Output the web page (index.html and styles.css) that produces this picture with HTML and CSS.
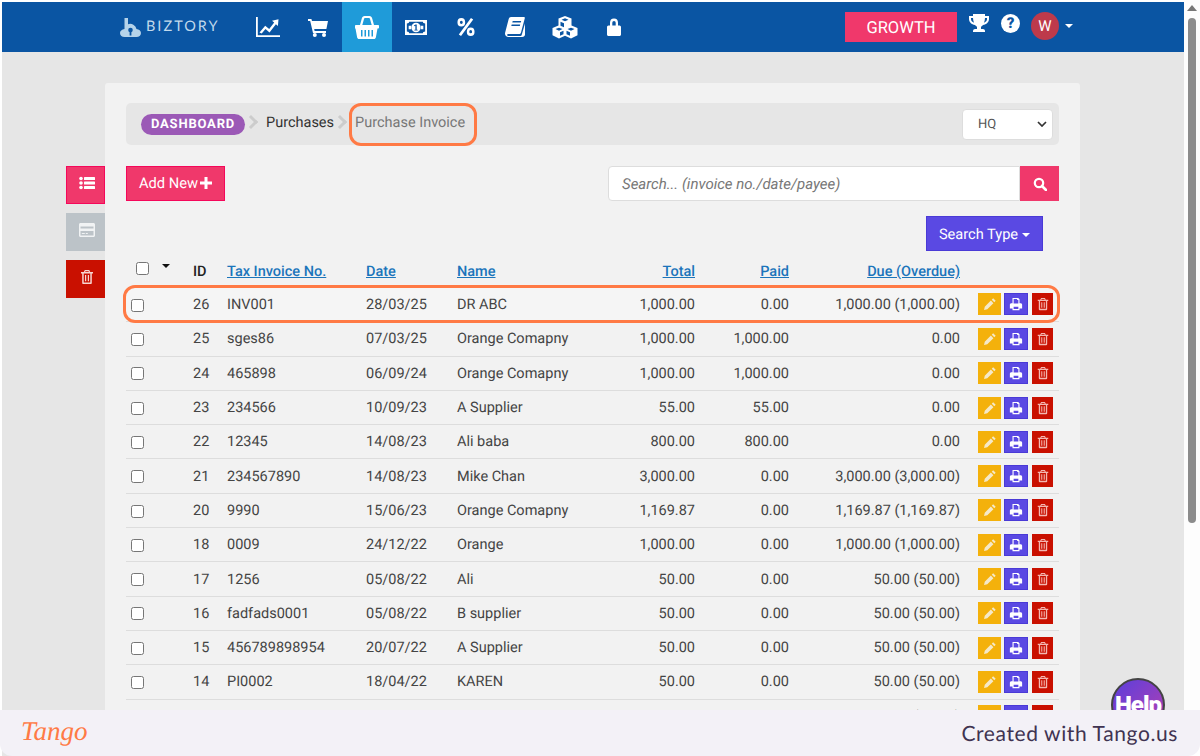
FILE: index.html
```html
<!DOCTYPE html>
<html lang="en">
<head>
<meta charset="utf-8">
<title>Purchase Invoice</title>
<link rel="stylesheet" href="styles.css">
</head>
<body>
<svg class="defs" width="0" height="0" aria-hidden="true">
  <symbol id="i-pencil" viewBox="0 0 16 16"><path d="M11.6 1.5l2.9 2.9-1.6 1.6L10 3.1zM9 4.1L11.9 7l-7 7-3.7.8.8-3.7z" fill="currentColor"/></symbol>
  <symbol id="i-print" viewBox="0 0 16 16"><path fill-rule="evenodd" d="M4 1h6.500L12 2.500V7h1.300c.9 0 1.700.8 1.700 1.700V13h-3v2H4v-2H1V8.700C1 7.800 1.800 7 2.700 7H4zM5.300 2.300V7.300h5.400V3.500H9.300V2.300zM5.300 11v2.800h5.400V11z" fill="currentColor"/></symbol>
  <symbol id="i-trash" viewBox="0 0 16 16"><path fill-rule="evenodd" d="M5.800 1h4.400l1 2H14v1.500h-1.200V14c0 .6-.5 1-1 1H4.200c-.5 0-1-.4-1-1V4.500H2V3h2.800zM6.500 2.200L6.100 3h3.800l-.4-.8zM4.700 4.500v9h6.600v-9zM6 6h1.200v6.200H6zM8.800 6H10v6.200H8.800z" fill="currentColor"/></symbol>
</svg>

<div class="frame">
  <header class="topbar">
    <div class="brand">
      <svg class="brand-mark" viewBox="0 0 21 19"><path d="M4.500 0H8v6.200A6.500 6.500 0 0 1 16.500 11c2.500.4 4.500 1.900 4.500 4 0 2.400-2 4-4.500 4h-12C2 19 0 17.400 0 15c0-2 1.800-3.500 4.500-4z" fill="#b5d3ea"/><circle cx="10.500" cy="12" r="2.300" fill="#0a55a3"/><rect x="9.600" y="13" width="1.800" height="4.500" fill="#0a55a3"/></svg>
      <span class="brand-name">BIZTORY</span>
    </div>
    <nav class="nav">
      <a class="nav-item"><svg class="ni ni-chart" viewBox="0 0 24 20" preserveAspectRatio="none"><path d="M0 0h1.800v18.200H24V20H0z" fill="#fff"/><path d="M3.500 15.500l5.700-6.800 4 3.400 5-6.500-2.200-1.800 6.500-1.600-.6 6.700-2-1.700-6.400 8.200-4-3.400-3.800 4.400z" fill="#fff"/></svg></a>
      <a class="nav-item"><svg class="ni ni-cart" viewBox="0 0 20 18" preserveAspectRatio="none"><path d="M0 0h3.400l.6 2H20l-1.600 8H6.200l.4 2H18v2H5L2.200 2H0z" fill="#fff"/><circle cx="6.800" cy="16" r="2" fill="#fff"/><circle cx="16" cy="16" r="2" fill="#fff"/></svg></a>
      <a class="nav-item active"><svg class="ni ni-basket" viewBox="0 0 24 23" preserveAspectRatio="none"><path fill-rule="evenodd" d="M5 9l1.800-6.500C7.100 1 8.200 0 9.500 0h5c1.300 0 2.400 1 2.700 2.500L19 9h4c.6 0 1 .4 1 1v1.500c0 .6-.4 1-1 1h-.5l-1.600 8.700c-.2 1-1 1.800-2 1.800H4.100c-1 0-1.800-.8-2-1.800L.5 12.500H0v-3C0 9.400.4 9 1 9zM7.300 9h9.400L15 3c-.1-.6-.5-.9-1-.9H10c-.5 0-.9.3-1 .9zM6 14v6.500h1.500V14zM9.500 14v6.500H11V14zM13 14v6.500h1.500V14zM16.500 14v6.500H18V14z" fill="#fff"/></svg></a>
      <a class="nav-item"><svg class="ni ni-money" viewBox="0 0 24 17" preserveAspectRatio="none"><path fill-rule="evenodd" d="M0 0h24v17H0zM2 4v9c1.500 0 2.500 1 2.500 2H19.500c0-1 1-2 2.500-2V4c-1.500 0-2.500-1-2.500-2H4.500c0 1-1 2-2.500 2z" fill="#fff"/><ellipse cx="12" cy="8.500" rx="5" ry="5.500" fill="#fff"/><path d="M11.500 5h1.300v6h1v1h-3.600v-1h1.100V6.500l-1 .7-.6-.9z" fill="#0a55a3"/><path d="M4 6.500h3c-.5 1.300-.5 2.700 0 4H4zM17 6.500h3v4h-3c.5-1.300.5-2.700 0-4z" fill="#fff"/></svg></a>
      <a class="nav-item"><svg class="ni ni-percent" viewBox="0 0 20 20" preserveAspectRatio="none"><path fill-rule="evenodd" d="M4.800 1a4.300 4.300 0 1 1 0 8.600 4.300 4.300 0 0 1 0-8.600zm0 2.700a1.600 1.600 0 1 0 0 3.200 1.600 1.600 0 0 0 0-3.200zM15.200 10.400a4.300 4.300 0 1 1 0 8.600 4.300 4.300 0 0 1 0-8.600zm0 2.700a1.600 1.600 0 1 0 0 3.200 1.600 1.600 0 0 0 0-3.200zM15.500 1L18 2.500 4.500 19 2 17.500z" fill="#fff"/></svg></a>
      <a class="nav-item"><svg class="ni ni-book" viewBox="0 0 20 20" preserveAspectRatio="none"><path fill-rule="evenodd" d="M6 0h13c.7 0 1 .6.800 1.200L16 15.500c-.3 1-1 1.500-2 1.500H3.500c-1 0-1.500.6-1.300 1.200.1.400.5.800 1.300.800h12c.6 0 1-.3 1.200-.9L20 6.500V18c-.4 1.200-1.500 2-2.800 2H3.500C1.500 20 0 18.500 0 16.800c0-.4 0-.7.100-1L3.700 2C4 .8 4.900 0 6 0zm1.700 4l-.4 1.500h8.500l.4-1.500zm-1 3.500l-.4 1.500h8.500l.4-1.500z" fill="#fff"/></svg></a>
      <a class="nav-item"><svg class="ni ni-cubes" viewBox="0 0 26 22" preserveAspectRatio="none"><path fill-rule="evenodd" d="M13 0l6.500 2.500v6.700l6 2.300v7L19 21.500l-6-2.500-6 2.500L.5 18.500v-7l6-2.300V2.500zM13 2.200L9.500 3.500 13 5l3.500-1.500zM7 11.200l-3.500 1.300L7 14l3.500-1.500zM19 11.200l-3.500 1.300L19 14l3.500-1.500zM8.500 5.500v3.800l3.500 1.500V7zM8 15.500v3.500l3.500-1.500V14zM18 15.500V19l-3.500-1.500V14z" fill="#fff"/></svg></a>
      <a class="nav-item"><svg class="ni ni-lock" viewBox="0 0 14 17" preserveAspectRatio="none"><path fill-rule="evenodd" d="M3 7V4.500a4 4 0 0 1 8 0V7h1.500c.8 0 1.500.7 1.500 1.500v7c0 .8-.7 1.500-1.500 1.500h-11C.7 17 0 16.300 0 15.500v-7C0 7.700.7 7 1.500 7zm2.300 0h3.400V4.500a1.700 1.700 0 0 0-3.400 0z" fill="#fff"/></svg></a>
    </nav>
    <div class="top-right">
      <a class="growth">GROWTH</a>
      <svg class="trophy" viewBox="0 0 20 20"><path fill-rule="evenodd" d="M4 0h12v2h4v3c0 3-2.500 5.500-6 6-.6.800-1.300 1.400-2 1.700V15h2c1 0 2 .9 2 2v1H4v-1c0-1.100 1-2 2-2h2v-2.300c-.7-.3-1.400-.9-2-1.700-3.500-.5-6-3-6-6V2h4zM2 4v1c0 1.600 1.200 3 3 3.700C4.400 7.300 4.100 5.700 4 4zm14 0c-.1 1.700-.4 3.300-1 4.700 1.800-.7 3-2.100 3-3.700V4z" fill="#fff"/></svg>
      <span class="help">?</span>
      <span class="avatar">W</span>
      <span class="caret caret-white"></span>
    </div>
  </header>

  <div class="page">
    <aside class="side">
      <a class="side-btn pink"><svg class="sb" viewBox="0 0 16 14"><circle cx="2" cy="2.500" r="1.800" fill="currentColor"/><circle cx="2" cy="7" r="1.800" fill="currentColor"/><circle cx="2" cy="11.500" r="1.800" fill="currentColor"/><rect x="5" y="1" width="11" height="3" rx=".6" fill="currentColor"/><rect x="5" y="5.500" width="11" height="3" rx=".6" fill="currentColor"/><rect x="5" y="10" width="11" height="3" rx=".6" fill="currentColor"/></svg></a>
      <a class="side-btn grey"><svg class="sb" viewBox="0 0 16 14"><path fill-rule="evenodd" d="M1.500 0h13c.8 0 1.500.7 1.500 1.500v11c0 .8-.7 1.500-1.500 1.500h-13C.7 14 0 13.300 0 12.500v-11C0 .7.700 0 1.500 0zM1.500 3.500v2h13v-2zM1.500 8v4.500h13V8zM2.800 10h3v1h-3zM6.800 10h2v1h-2z" fill="currentColor"/></svg></a>
      <a class="side-btn red"><svg class="sb"><use href="#i-trash"/></svg></a>
    </aside>

    <main class="card">
      <div class="crumbs">
        <span class="pill">DASHBOARD</span>
        <span class="sep"></span>
        <span class="crumb">Purchases</span>
        <span class="sep"></span>
        <span class="crumb current">Purchase Invoice</span>
        <span class="branch">HQ<svg class="chev" viewBox="0 0 10 6"><path d="M1 1l4 4 4-4" fill="none" stroke="#333" stroke-width="1.700"/></svg></span>
      </div>

      <div class="tools">
        <a class="add">Add New<svg class="plus" viewBox="0 0 12 12"><path d="M4.500 0h3v4.500H12v3H7.500V12h-3V7.500H0v-3h4.500z" fill="#fff"/></svg></a>
        <div class="search">
          <span class="search-input">Search... (invoice no./date/payee)</span>
          <a class="search-btn"><svg class="mag" viewBox="0 0 14 14"><circle cx="6" cy="6" r="4.200" fill="none" stroke="#fff" stroke-width="2.200"/><path d="M9 9l4 4" stroke="#fff" stroke-width="2.600" stroke-linecap="round"/></svg></a>
        </div>
      </div>

      <div class="type-row"><a class="search-type">Search Type<span class="caret caret-small"></span></a></div>

      <table class="grid">
        <colgroup><col class="c1"><col class="c2"><col class="c3"><col class="c4"><col class="c5"><col class="c6"><col class="c7"><col class="c8"><col class="c9"></colgroup>
        <thead>
          <tr>
            <th class="selall"><span class="box"></span><span class="caret caret-dark"></span></th>
            <th>ID</th>
            <th><a>Tax Invoice No.</a></th>
            <th><a>Date</a></th>
            <th><a>Name</a></th>
            <th class="r"><a>Total</a></th>
            <th class="r"><a>Paid</a></th>
            <th class="r"><a>Due (Overdue)</a></th>
            <th></th>
          </tr>
        </thead>
        <tbody id="rows"></tbody>
      </table>
    </main>
  </div>

  <div class="mark mark-crumb"></div>
  <div class="mark mark-row"></div>
  <div class="help-bubble">Help</div>
  <div class="scrollbar"><span class="arrow"></span><span class="thumb"></span></div>
  <footer class="tango">
    <span class="tango-logo">Tango</span>
    <span class="tango-text">Created with Tango.us</span>
  </footer>
</div>
<script src="rows.js"></script>
</body>
</html>
```
FILE: rows.js
```js
var data = [
  ["26","INV001","28/03/25","DR ABC","1,000.00","0.00","1,000.00 (1,000.00)"],
  ["25","sges86","07/03/25","Orange Comapny","1,000.00","1,000.00","0.00"],
  ["24","465898","06/09/24","Orange Comapny","1,000.00","1,000.00","0.00"],
  ["23","234566","10/09/23","A Supplier","55.00","55.00","0.00"],
  ["22","12345","14/08/23","Ali baba","800.00","800.00","0.00"],
  ["21","234567890","14/08/23","Mike Chan","3,000.00","0.00","3,000.00 (3,000.00)"],
  ["20","9990","15/06/23","Orange Comapny","1,169.87","0.00","1,169.87 (1,169.87)"],
  ["18","0009","24/12/22","Orange","1,000.00","0.00","1,000.00 (1,000.00)"],
  ["17","1256","05/08/22","Ali","50.00","0.00","50.00 (50.00)"],
  ["16","fadfads0001","05/08/22","B supplier","50.00","0.00","50.00 (50.00)"],
  ["15","456789898954","20/07/22","A Supplier","50.00","0.00","50.00 (50.00)"],
  ["14","PI0002","18/04/22","KAREN","50.00","0.00","50.00 (50.00)"],
  ["13","PI0001","18/04/22","KAREN","50.00","0.00","50.00 (50.00)"]
];
var html = "";
data.forEach(function (d) {
  html += '<tr><td><span class="box"></span></td><td>' + d[0] + '</td><td>' + d[1] + '</td><td>' + d[2] +
    '</td><td>' + d[3] + '</td><td class="r">' + d[4] + '</td><td class="r">' + d[5] + '</td><td class="r">' + d[6] +
    '</td><td class="acts"><span class="act yellow"><svg class="ai"><use href="#i-pencil"/></svg></span>' +
    '<span class="act violet"><svg class="ai"><use href="#i-print"/></svg></span>' +
    '<span class="act red"><svg class="ai"><use href="#i-trash"/></svg></span></td></tr>';
});
document.getElementById("rows").innerHTML = html;
```
FILE: styles.css
```css
* { box-sizing: border-box; }
html, body { margin: 0; padding: 0; height: 100%; overflow: hidden; background: #fff; }
body { font-family: Roboto, "Liberation Sans", sans-serif; color: #333; text-rendering: geometricPrecision; }
.defs { position: absolute; }
a { text-decoration: none; }

.frame { position: relative; width: 1200px; height: 756px; overflow: hidden; padding: 2px 0 0 2px; background: #fff; }

/* Top bar */
.topbar { display: flex; align-items: center; width: 1182px; height: 50px; background: #0a55a3; padding-left: 118px; }
.brand { display: flex; align-items: center; width: 123.500px; color: #c2daec; }
.brand-mark { width: 21px; height: 19px; margin-right: 5px; }
.brand-name { font-family: Lato, sans-serif; font-size: 14.500px; font-weight: 400; letter-spacing: 2px; margin-top: -2px; }
.nav { display: flex; height: 50px; }
.nav-item { display: flex; align-items: center; justify-content: center; width: 49.400px; height: 50px; }
.nav-item.active { background: #1f9bd9; }
.ni { display: block; }
.ni-chart { width: 24px; height: 20px; }
.ni-cart { width: 20px; height: 18px; margin-top: 1px; }
.ni-basket { width: 24px; height: 23px; }
.ni-money { width: 22px; height: 15px; }
.ni-percent { width: 18px; height: 20px; }
.ni-book { width: 20px; height: 20px; }
.ni-cubes { width: 26px; height: 23px; }
.ni-lock { width: 14px; height: 18px; }
.top-right { display: flex; align-items: center; margin-left: auto; height: 50px; }
.growth { display: flex; align-items: center; justify-content: center; width: 112px; height: 30px; padding-top: 2px; background: #f0386b; color: #fff; font-size: 16.500px; }
.trophy { width: 20px; height: 20px; margin: -7px 0 0 12px; }
.help { width: 19px; height: 19px; margin: -7px 0 0 12px; border-radius: 50%; background: #fff; color: #0a55a3; font-size: 15px; font-weight: 900; line-height: 19px; text-align: center; }
.avatar { width: 28px; height: 28px; margin: -2px 0 0 11px; border-radius: 50%; background: #bd3a4b; color: #fff; font-size: 15px; line-height: 28px; text-align: center; }
.caret { display: inline-block; width: 0; height: 0; border-left: 4px solid transparent; border-right: 4px solid transparent; border-top: 4px solid #fff; }
.caret-white { margin: -2px 111px 0 6px; }

/* Page */
.page { display: flex; align-items: flex-start; height: 704px; background: #e6e6e6; padding: 31px 0 0 64px; width: 1182px; }
.side { display: flex; flex-direction: column; gap: 9.500px; width: 39px; margin-top: 83px; }
.side-btn { display: flex; align-items: center; justify-content: center; height: 37.500px; padding: 0 0 3px 3px; color: #fff; }
.side-btn.pink { background: #f0386b; border: 1px solid #f5075a; }
.side-btn.grey { background: #bcc3c8; color: #f1f3f4; }
.side-btn.red { background: #c91000; color: #f7d5d0; }
.sb { width: 16px; height: 16px; }
.card { width: 975px; height: 660px; background: #f2f2f2; border-radius: 3px 3px 0 0; padding: 20px 21px 0; }

.crumbs { display: flex; align-items: center; height: 42px; background: #e6e6e6; border-radius: 5px; padding: 0 6px 0 15px; font-size: 14.500px; }
.pill { display: inline-flex; align-items: center; justify-content: center; width: 104px; height: 21px; border-radius: 11px; background: #9b59b6; color: #fff; font-size: 13px; font-weight: 700; letter-spacing: .8px; }
.sep { width: 10px; height: 10px; margin: -4px 10px 0 1px; border-top: 3px solid #ccc; border-right: 3px solid #ccc; transform: rotate(45deg); }
.crumb { color: #333; margin-top: -2px; line-height: 1; }
.crumb.current { color: #777; }
.branch { display: flex; align-items: center; justify-content: space-between; margin-left: auto; width: 91px; height: 31px; background: #fff; border: 1px solid #ddd; border-radius: 4px; padding: 0 5px 0 15px; font-size: 13px; color: #555; }
.chev { width: 10px; height: 6px; }

.tools { display: flex; align-items: flex-start; justify-content: space-between; margin-top: 21px; }
.add { display: flex; align-items: center; width: 99px; height: 34.500px; padding: 0 0 1px 12px; background: #f0386b; border: 1px solid #f5075a; color: #fff; font-size: 14.700px; }
.plus { width: 12px; height: 12px; margin-left: 2px; }
.search { display: flex; width: 451px; height: 35px; }
.search-input { flex: 1; display: flex; align-items: center; background: #fff; border: 1px solid #ddd; border-radius: 4px 0 0 4px; padding-left: 13px; font-size: 15px; font-style: italic; color: #777; }
.search-btn { display: flex; align-items: center; justify-content: center; width: 39px; background: #f0386b; }
.mag { width: 14px; height: 14px; }

.type-row { display: flex; justify-content: flex-end; padding-right: 16px; margin-top: 15px; }
.search-type { display: flex; align-items: center; justify-content: center; width: 117px; height: 35px; background: #5a49e3; border: 1px solid #4a3ad6; color: #fff; font-size: 14.600px; }
.caret-small { margin: 2px 0 0 4px; }

/* Table */
.grid { width: 933px; table-layout: fixed; border-collapse: collapse; margin-top: 1.500px; font-size: 14.500px; }
.c1 { width: 67px; } .c2 { width: 34px; } .c3 { width: 139px; } .c4 { width: 91px; } .c5 { width: 143px; }
.c6 { width: 95px; } .c7 { width: 94px; } .c8 { width: 171px; } .c9 { width: 99px; }
th, td { padding: 0; text-align: left; font-weight: 400; white-space: nowrap; }
th { height: 35px; font-weight: 500; color: #222; padding-top: 3px; }
th a { color: #1b75bb; text-decoration: underline; }
td { height: 34.300px; border-top: 1px solid #ddd; color: #444; }
thead + tbody tr:first-child td { border-top: 0; background: #f5f5f5; }
.r, th.r { text-align: right; }
.box { display: inline-block; width: 13px; height: 13px; margin-left: 5px; background: #fff; border: 1px solid #767676; border-radius: 2.500px; vertical-align: middle; }
.selall .box { margin-left: 10px; margin-top: -7px; }
.caret-dark { border-top-color: #111; vertical-align: 8px; margin-left: 13px; }
.acts { padding-left: 18px; font-size: 0; }
.act { display: inline-flex; align-items: center; justify-content: center; width: 23px; height: 22px; margin-right: 3px; vertical-align: middle; color: #f5e9c8; }
.act.yellow { background: #f4b10b; }
.act.violet { background: #5a49e3; color: #fff; border: 1px solid #4a3ad6; width: 24px; margin-right: 4px; }
.act.red { background: #c91000; color: #f3b7b0; width: 21px; margin-right: 0; }
.ai { width: 14px; height: 14px; }

/* Overlay annotations */
.mark { position: absolute; border: 3px solid #ff7a45; border-radius: 12px; pointer-events: none; }
.mark-crumb { left: 349px; top: 103px; width: 128px; height: 43px; }
.mark-row { left: 123px; top: 285px; width: 937px; height: 38px; }

.help-bubble { position: absolute; left: 1111px; top: 678px; width: 54px; height: 54px; border-radius: 50%; background: linear-gradient(135deg, #5b3fdc, #b43fb0); border: 2px solid #444; color: #fff; font-size: 24px; font-weight: 900; letter-spacing: -1px; text-align: center; line-height: 50px; }

.scrollbar { position: absolute; right: 0; top: 0; width: 16px; height: 710px; background: #fdfdfd; }
.arrow { position: absolute; left: 3px; top: 5px; width: 0; height: 0; border-left: 5px solid transparent; border-right: 5px solid transparent; border-bottom: 6px solid #777; }
.thumb { position: absolute; left: 4px; top: 18px; width: 8px; height: 505px; border-radius: 4px; background: #8c8c8c; }

.tango { position: absolute; left: 0; bottom: 0; width: 1200px; height: 46px; display: flex; align-items: center; justify-content: space-between; background: #f3f1f7; border-radius: 0 0 12px 12px; padding: 0 22px 0 21px; }
.tango-logo { font-family: "Liberation Serif", serif; font-style: italic; font-size: 27px; color: #ff7a45; margin-top: -4px; }
.tango-text { font-family: Lato, sans-serif; font-size: 21px; color: #3f3351; letter-spacing: .6px; }
```
